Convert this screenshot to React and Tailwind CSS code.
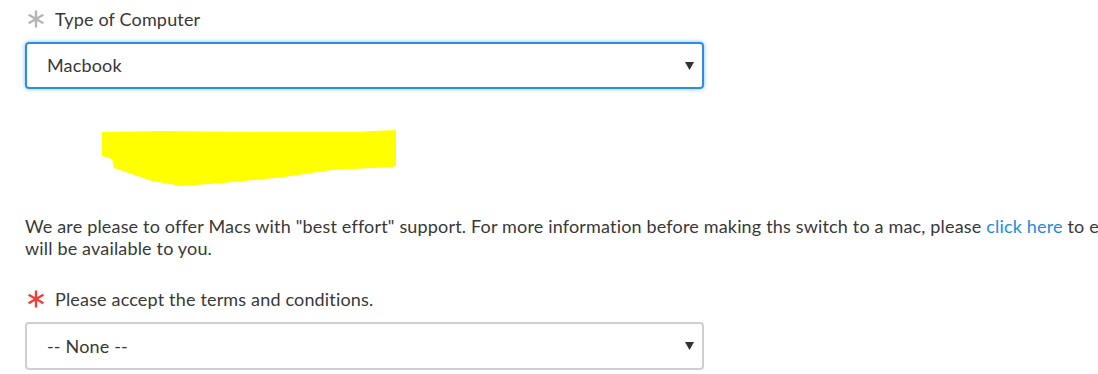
import React from "react";

const Arrow = () => (
  <svg width="9" height="8" viewBox="0 0 9 8" className="shrink-0">
    <path d="M0 0 H9 L4.5 8 Z" fill="#333" />
  </svg>
);

const Star = ({ color }) => (
  <svg width="20" height="20" viewBox="0 0 20 20" className="shrink-0">
    <g stroke={color} strokeWidth="2.4" strokeLinecap="butt">
      <line x1="10" y1="1.5" x2="10" y2="18.5" />
      <line x1="2.6" y1="5.7" x2="17.4" y2="14.3" />
      <line x1="2.6" y1="14.3" x2="17.4" y2="5.7" />
    </g>
  </svg>
);

export default function App() {
  return (
    <div
      className="w-[1098px] h-[374px] overflow-hidden bg-white text-[#383838] text-[18px] tracking-[0.17px]"
      style={{ fontFamily: "Lato, 'Open Sans', sans-serif" }}
    >
      <div className="pl-[25px] pt-[9px]">
        {/* Type of Computer */}
        <div className="flex items-center gap-[9px] h-[20px] pl-[1px]">
          <Star color="#b5b5b5" />
          <span>Type of Computer</span>
        </div>
        <div className="mt-[13px] w-[679px] h-[47px] rounded-[4px] border-2 border-[#2d8ee0] shadow-[0_0_4px_#7fbcf0] flex items-center justify-between pl-[20px] pr-[8px]">
          <span>Macbook</span>
          <Arrow />
        </div>

        {/* redacted */}
        <div className="mt-[41px] ml-[77px]">
          <svg width="296" height="58" viewBox="0 0 296 58" className="block">
            <path
              d="M0 2 L60 1 L160 2 L250 2 L294 0 L294 36 L290 37 L230 40 L182 47 L120 53 L80 56 L50 51 L12 38 L10 29 L0 26 Z"
              fill="#ffff00"
            />
          </svg>
        </div>

        {/* notice */}
        <div className="mt-[27px] w-[1200px] leading-[22px]">
          <div className="whitespace-nowrap">
            We are please to offer Macs with "best effort" support. For more information before making ths switch to a mac, please{" "}
            <span className="text-[#1d8ce0]">click here</span> to explore what level of support
          </div>
          <div>will be available to you.</div>
        </div>

        {/* Terms */}
        <div className="mt-[30px] flex items-center gap-[9px] h-[20px] pl-[1px]">
          <Star color="#f23c3c" />
          <span>Please accept the terms and conditions.</span>
        </div>
        <div className="mt-[13px] w-[679px] h-[48px] rounded-[4px] border-2 border-[#cfcfcf] flex items-center justify-between pl-[20px] pr-[8px]">
          <span>-- None --</span>
          <Arrow />
        </div>
      </div>
    </div>
  );
}
